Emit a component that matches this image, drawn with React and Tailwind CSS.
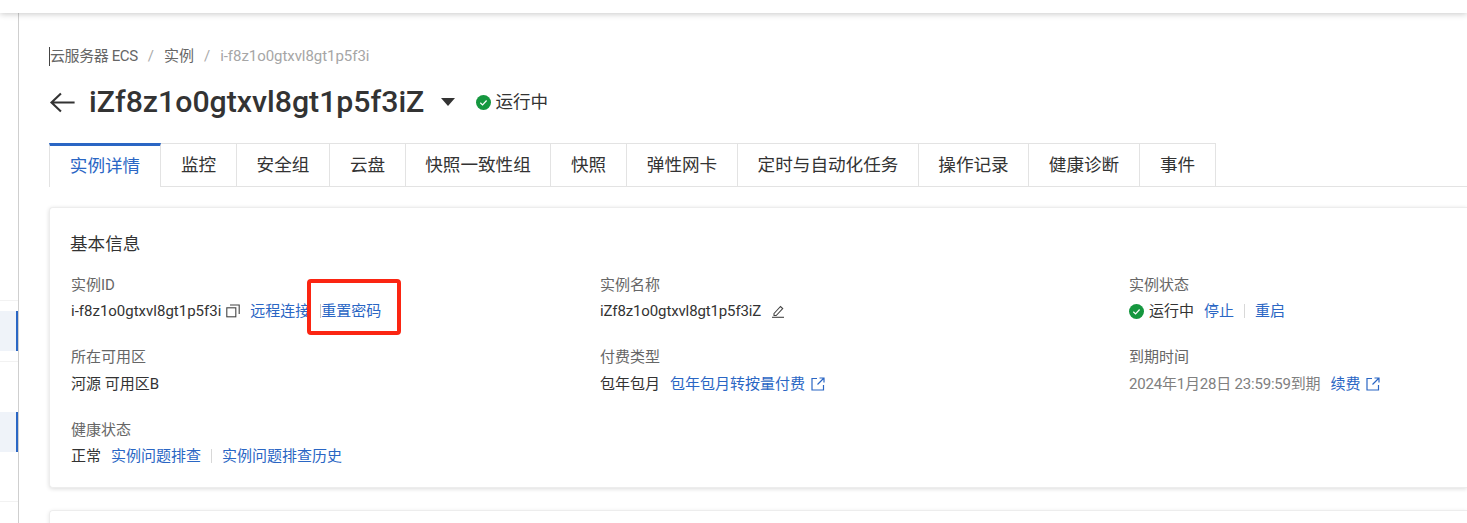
import React from 'react';

const font = { fontFamily: '"Roboto", "Noto Sans CJK SC", sans-serif' };

const tabs = [
  { label: '实例详情', width: 'w-[112px]', active: true },
  { label: '监控', width: 'w-[76px]' },
  { label: '安全组', width: 'w-[93px]' },
  { label: '云盘', width: 'w-[76px]' },
  { label: '快照一致性组', width: 'w-[145px]' },
  { label: '快照', width: 'w-[76px]' },
  { label: '弹性网卡', width: 'w-[111px]' },
  { label: '定时与自动化任务', width: 'w-[181px]' },
  { label: '操作记录', width: 'w-[110px]' },
  { label: '健康诊断', width: 'w-[111px]' },
  { label: '事件', width: 'w-[76px]' },
];

const CheckCircle = ({ className }) => (
  <svg viewBox="0 0 16 16" className={className}>
    <circle cx="8" cy="8" r="8" fill="#15973f" />
    <path d="M4.6 8.2l2.4 2.3 4.3-4.6" fill="none" stroke="#fff" strokeWidth="1.3" />
  </svg>
);

const External = () => (
  <svg viewBox="0 0 14 14" className="w-[14px] h-[14px] ml-[6px]" fill="none" stroke="#2a66c4" strokeWidth="1.2">
    <path d="M6 1.5H1v11.5h11.5V8" />
    <path d="M8.5 1H13v4.5M13 1L6.5 7.5" />
  </svg>
);

const Copy = () => (
  <svg viewBox="0 0 14 14" className="w-[14px] h-[14px] ml-[5px]" fill="none" stroke="#444" strokeWidth="1.1">
    <rect x="0.8" y="3.8" width="9" height="9" />
    <path d="M4 1h9.2v9" />
  </svg>
);

const Pencil = () => (
  <svg viewBox="0 0 14 14" className="w-[14px] h-[14px] ml-[10px]" fill="none" stroke="#444" strokeWidth="1.1">
    <path d="M3 9.5L9.5 2.5l2.2 2-6.5 7H3z" />
    <path d="M1 13.3h12" />
  </svg>
);

const Link = ({ children }) => <a className="text-[#2a66c4]">{children}</a>;

const Divider = () => <span className="w-px h-[14px] bg-[#d8d8d8] mx-[10px]" />;

const Field = ({ label, tall, children }) => (
  <div className={tall ? 'h-[73px]' : 'h-[72px]'}>
    <div className="h-[20px] leading-[20px] text-[#666]">{label}</div>
    <div className={`${tall ? 'mt-[7px]' : 'mt-[6px]'} h-[20px] flex items-center text-[#333] whitespace-nowrap`}>{children}</div>
  </div>
);

const SideItem = ({ top }) => (
  <div className={`${top} h-[40px] bg-[#eff3f9] border-r-2 border-[#2a66c4]`} />
);

export default function App() {
  return (
    <div className="relative w-[1467px] h-[523px] overflow-hidden bg-white" style={font}>
      {/* top bar */}
      <div className="h-[13px] bg-white shadow-[0_1px_6px_rgba(0,0,0,0.22)] relative z-10" />

      <div className="flex h-[510px]">
        {/* collapsed side menu */}
        <aside className="w-[19px] shrink-0 border-r border-[#cfcfcf] flex flex-col">
          <div className="h-[288px] border-b border-[#f2f2f2]" />
          <SideItem top="mt-[10px]" />
          <div className="h-[11px] border-b border-[#f2f2f2]" />
          <SideItem top="mt-[50px]" />
          <div className="h-[50px] border-b border-[#f2f2f2]" />
        </aside>

        <main className="flex-1 pl-[30px] min-w-0">
          {/* breadcrumb */}
          <div className="mt-[33px] h-[20px] flex items-center text-[15px] whitespace-nowrap">
            <span className="w-px h-[19px] bg-[#444]" />
            <span className="text-[#666] tracking-[-0.4px]">云服务器 ECS</span>
            <span className="text-[#aaa] mx-[10px]">/</span>
            <span className="text-[#666]">实例</span>
            <span className="text-[#aaa] mx-[10px]">/</span>
            <span className="text-[#a6a6a6] tracking-[-0.05px]">i-f8z1o0gtxvl8gt1p5f3i</span>
          </div>

          {/* title */}
          <div className="mt-[16px] h-[40px] flex items-center">
            <svg viewBox="0 0 24 20" className="w-[26px] h-[21px] text-[#333]" fill="none" stroke="currentColor" strokeWidth="2">
              <path d="M24 10H2M11 1.5L2 10l9 8.5" />
            </svg>
            <h1 className="ml-[14px] text-[30.25px] font-medium text-[#333] leading-[40px] whitespace-nowrap">iZf8z1o0gtxvl8gt1p5f3iZ</h1>
            <svg viewBox="0 0 14 8" className="ml-[16px] w-[16px] h-[8px]"><path d="M0 0h14L7 8z" fill="#333" /></svg>
            <CheckCircle className="ml-[20px] w-[15px] h-[15px]" />
            <span className="ml-[4px] text-[17.6px] text-[#333]">运行中</span>
          </div>

          {/* tabs */}
          <div className="mt-[21px] h-[44px] flex border-b border-[#e3e3e3]">
            {tabs.map((t) => (
              <div
                key={t.label}
                className={
                  t.active
                    ? `${t.width} h-[44px] flex items-center justify-center text-[17.6px] text-[#2a66c4] bg-white border-t-[3px] border-t-[#2a66c4] border-l border-r border-[#e3e3e3]`
                    : `${t.width} h-[43px] flex items-center justify-center text-[17.6px] text-[#333] border-t border-r border-[#e3e3e3]`
                }
              >
                {t.label}
              </div>
            ))}
          </div>

          {/* basic info card */}
          <section className="mt-[20px] h-[281px] rounded-l-[4px] bg-white pl-[21px] pt-[24px] text-[15px] border border-r-0 border-[#ededed] shadow-[0_1px_4px_rgba(0,0,0,0.14)]">
            <h2 className="-ml-px text-[17.6px] leading-[24px] text-[#333]">基本信息</h2>
            <div className="mt-[19px] grid grid-cols-[529px_529px_1fr]">
              <Field label="实例ID">
                <span>i-f8z1o0gtxvl8gt1p5f3i</span>
                <Copy />
                <span className="ml-[10px]"><Link>远程连接</Link></span>
                <span className="w-px h-[14px] bg-[#c8c8c8] ml-[10px]" />
                <Link>重置密码</Link>
              </Field>
              <Field label="实例名称">
                <span className="tracking-[-0.13px]">iZf8z1o0gtxvl8gt1p5f3iZ</span>
                <Pencil />
              </Field>
              <Field label="实例状态">
                <CheckCircle className="w-[15px] h-[15px] mr-[5px]" />
                <span>运行中</span>
                <span className="ml-[10px]"><Link>停止</Link></span>
                <Divider />
                <Link>重启</Link>
              </Field>
              <Field label="所在可用区" tall>河源 可用区B</Field>
              <Field label="付费类型" tall>
                <span>包年包月</span>
                <span className="ml-[10px]"><Link>包年包月转按量付费</Link></span>
                <External />
              </Field>
              <Field label="到期时间" tall>
                <span className="text-[#808080] tracking-[-0.2px]">2024年1月28日 23:59:59到期</span>
                <span className="ml-[10px]"><Link>续费</Link></span>
                <External />
              </Field>
              <Field label="健康状态">
                <span>正常</span>
                <span className="ml-[10px]"><Link>实例问题排查</Link></span>
                <Divider />
                <Link>实例问题排查历史</Link>
              </Field>
            </div>
          </section>

          {/* next card, cut off by the window */}
          <section className="mt-[22px] h-[40px] rounded-l-[4px] border border-r-0 border-[#ededed] shadow-[0_1px_4px_rgba(0,0,0,0.1)]" />
        </main>
      </div>

      {/* red annotation box drawn on the screenshot */}
      <div className="absolute left-[307px] top-[279px] w-[94px] h-[56px] border-[4px] border-[#fb2512] rounded-[4px]" />
    </div>
  );
}
